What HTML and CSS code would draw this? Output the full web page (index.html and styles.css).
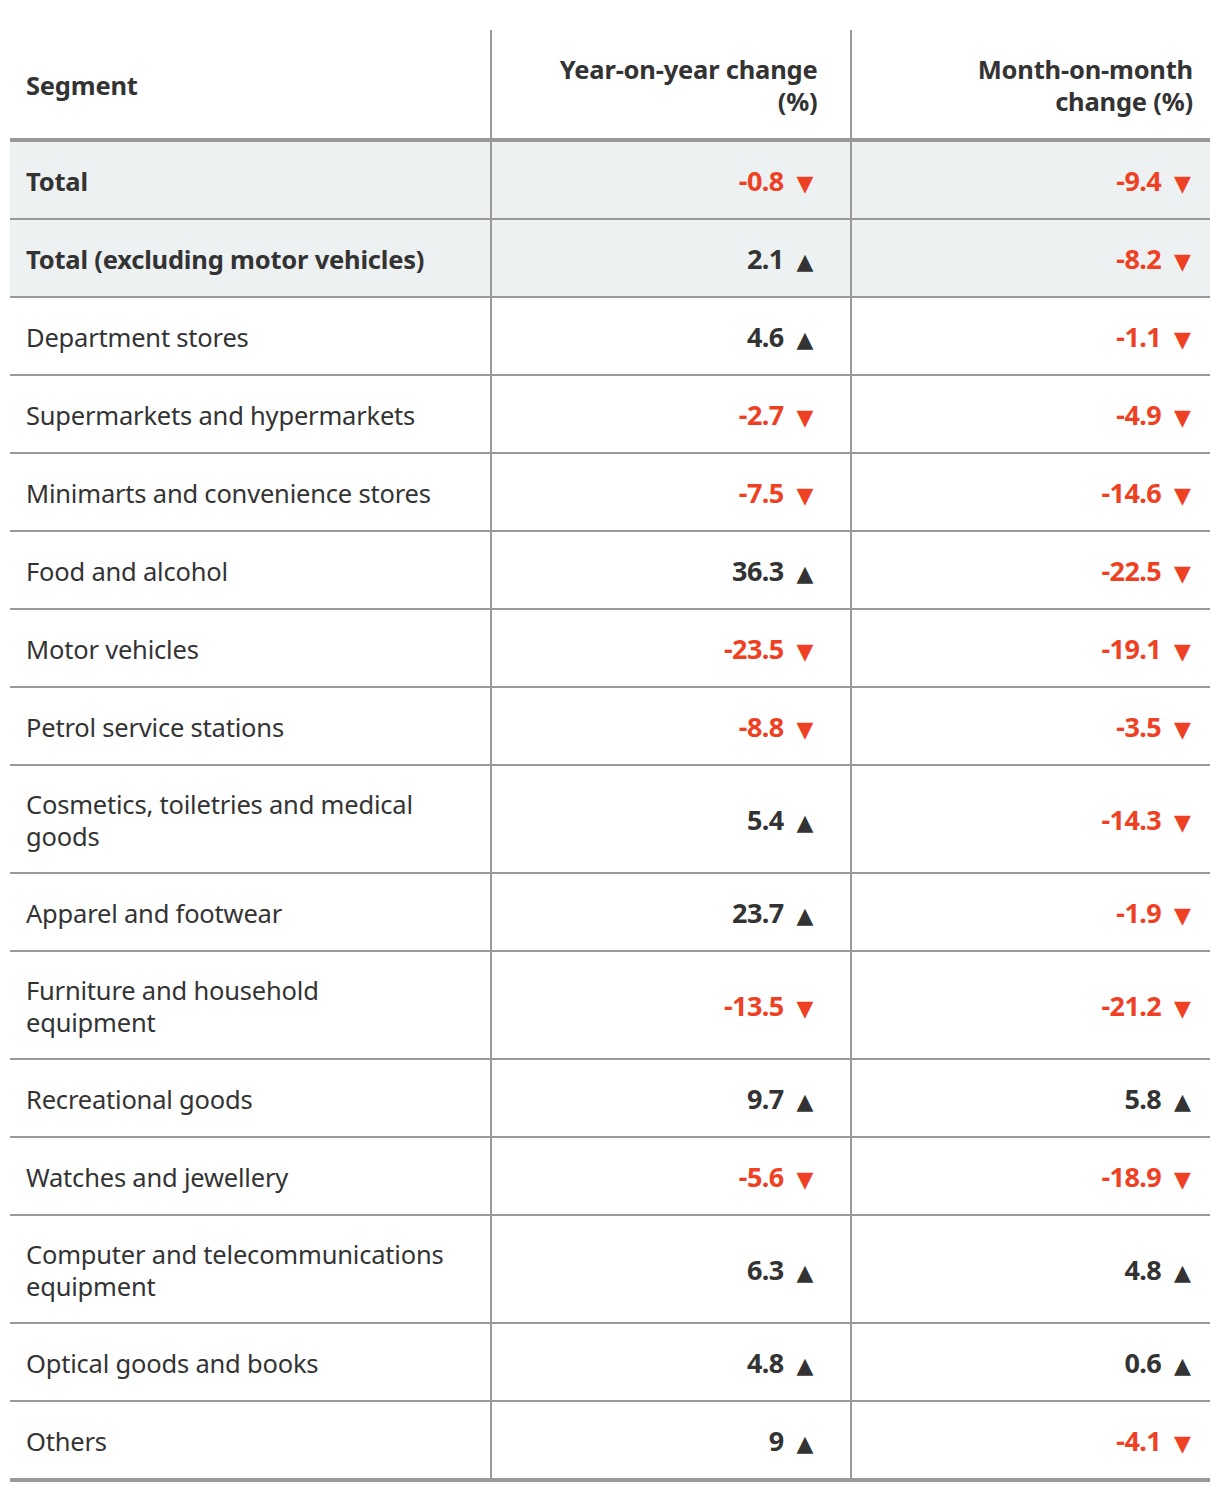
FILE: index.html
```html
<!DOCTYPE html>
<html>
<head>
<meta charset="utf-8">
<link rel="stylesheet" href="styles.css">
</head>
<body>
<table class="data">
  <thead>
    <tr>
      <th class="seg">Segment</th>
      <th class="num c2">Year-on-year change<br>(%)</th>
      <th class="num c3">Month-on-month<br>change (%)</th>
    </tr>
  </thead>
  <tbody>
    <tr class="hl"><td class="seg">Total</td><td class="num c2 down">-0.8<span class="tri">▼</span></td><td class="num c3 down">-9.4<span class="tri">▼</span></td></tr>
    <tr class="hl"><td class="seg">Total (excluding motor vehicles)</td><td class="num c2 up">2.1<span class="tri">▲</span></td><td class="num c3 down">-8.2<span class="tri">▼</span></td></tr>
    <tr><td class="seg">Department stores</td><td class="num c2 up">4.6<span class="tri">▲</span></td><td class="num c3 down">-1.1<span class="tri">▼</span></td></tr>
    <tr><td class="seg">Supermarkets and hypermarkets</td><td class="num c2 down">-2.7<span class="tri">▼</span></td><td class="num c3 down">-4.9<span class="tri">▼</span></td></tr>
    <tr><td class="seg">Minimarts and convenience stores</td><td class="num c2 down">-7.5<span class="tri">▼</span></td><td class="num c3 down">-14.6<span class="tri">▼</span></td></tr>
    <tr><td class="seg">Food and alcohol</td><td class="num c2 up">36.3<span class="tri">▲</span></td><td class="num c3 down">-22.5<span class="tri">▼</span></td></tr>
    <tr><td class="seg">Motor vehicles</td><td class="num c2 down">-23.5<span class="tri">▼</span></td><td class="num c3 down">-19.1<span class="tri">▼</span></td></tr>
    <tr><td class="seg">Petrol service stations</td><td class="num c2 down">-8.8<span class="tri">▼</span></td><td class="num c3 down">-3.5<span class="tri">▼</span></td></tr>
    <tr><td class="seg">Cosmetics, toiletries and medical<br>goods</td><td class="num c2 up">5.4<span class="tri">▲</span></td><td class="num c3 down">-14.3<span class="tri">▼</span></td></tr>
    <tr><td class="seg">Apparel and footwear</td><td class="num c2 up">23.7<span class="tri">▲</span></td><td class="num c3 down">-1.9<span class="tri">▼</span></td></tr>
    <tr><td class="seg">Furniture and household<br>equipment</td><td class="num c2 down">-13.5<span class="tri">▼</span></td><td class="num c3 down">-21.2<span class="tri">▼</span></td></tr>
    <tr><td class="seg">Recreational goods</td><td class="num c2 up">9.7<span class="tri">▲</span></td><td class="num c3 up">5.8<span class="tri">▲</span></td></tr>
    <tr><td class="seg">Watches and jewellery</td><td class="num c2 down">-5.6<span class="tri">▼</span></td><td class="num c3 down">-18.9<span class="tri">▼</span></td></tr>
    <tr><td class="seg">Computer and telecommunications<br>equipment</td><td class="num c2 up">6.3<span class="tri">▲</span></td><td class="num c3 up">4.8<span class="tri">▲</span></td></tr>
    <tr><td class="seg">Optical goods and books</td><td class="num c2 up">4.8<span class="tri">▲</span></td><td class="num c3 up">0.6<span class="tri">▲</span></td></tr>
    <tr><td class="seg">Others</td><td class="num c2 up">9<span class="tri">▲</span></td><td class="num c3 down">-4.1<span class="tri">▼</span></td></tr>
  </tbody>
</table>
</body>
</html>
```
FILE: styles.css
```css
html, body {
  margin: 0;
  padding: 0;
  background: #fff;
}
body {
  padding: 30px 10px 10px 10px;
  font-family: "Noto Sans", "DejaVu Sans", sans-serif;
  color: #333;
}
.data {
  width: 1200px;
  border-collapse: collapse;
  table-layout: fixed;
}
.data th, .data td {
  font-size: 25.5px;
  line-height: 32px;
  padding: 23px 16px 21px 16px;
  vertical-align: middle;
  letter-spacing: -0.2px;
}
.data td.seg {
  padding-top: 22px;
  padding-bottom: 20px;
}
.data th {
  font-weight: 700;
  text-align: left;
  border-bottom: 4px solid #999;
}
.data th.seg { width: 448px; }
.data th + th, .data td + td {
  border-left: 2px solid #999;
}
.data td {
  border-bottom: 2px solid #999;
  font-weight: 400;
}
.data tbody tr:last-child td {
  border-bottom: 4px solid #999;
}
.data .num { text-align: right; font-weight: 700; }
.data td.num { font-size: 27px; letter-spacing: -0.6px; }
.data th.c2 { padding-right: 32px; }
.data th.c3 { padding-right: 17px; }
.data td.c2 { padding-right: 36px; }
.data td.c3 { padding-right: 19px; }
.data tr.hl td { background: #eef1f2; }
.data tr.hl td.seg { font-weight: 700; }
.down { color: #ee4123; }
.up { color: #333; }
.tri {
  display: inline-block;
  margin-left: 13px;
  font-size: 22px;
  line-height: 20px;
  letter-spacing: 0;
  vertical-align: baseline;
}
```
